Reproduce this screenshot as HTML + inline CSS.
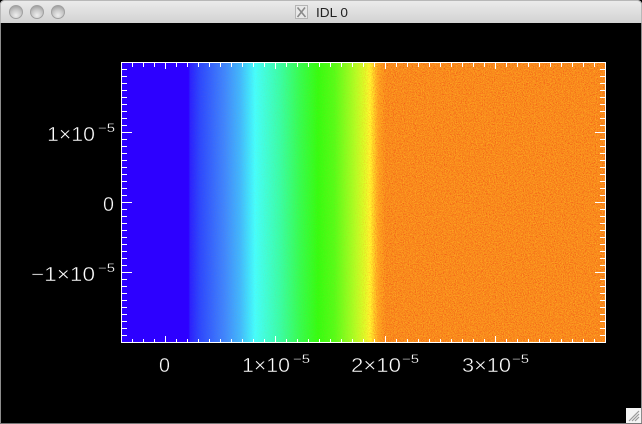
<!DOCTYPE html>
<html>
<head>
<meta charset="utf-8">
<style>
html,body{margin:0;padding:0;background:#fff;width:642px;height:424px;overflow:hidden}
svg{display:block}
.t{font-family:"Liberation Sans",sans-serif;fill:#fff;stroke:#000;stroke-width:.45px;paint-order:fill stroke}
.b{font-size:20px}
.s{font-size:12px;stroke-width:.2px}
</style>
</head>
<body>
<svg width="642" height="424" viewBox="0 0 642 424" xmlns="http://www.w3.org/2000/svg">
<defs>
<linearGradient id="bar" x1="0" y1="0" x2="0" y2="1">
<stop offset="0" stop-color="#ececec"/><stop offset="1" stop-color="#d2d2d2"/>
</linearGradient>
<radialGradient id="btn" cx=".5" cy=".75" r=".75">
<stop offset="0" stop-color="#eeeeee"/><stop offset=".55" stop-color="#c8c8c8"/><stop offset="1" stop-color="#9d9d9d"/>
</radialGradient>
<linearGradient id="map" gradientUnits="userSpaceOnUse" x1="122" y1="0" x2="605" y2="0">
<stop offset="0" stop-color="#2d00ff"/>
<stop offset=".1377" stop-color="#2d00ff"/>
<stop offset=".1408" stop-color="#2a20ff"/>
<stop offset=".1615" stop-color="#2c48ff"/>
<stop offset=".2133" stop-color="#3f88ff"/>
<stop offset=".2443" stop-color="#40b8ff"/>
<stop offset=".2650" stop-color="#40e8ff"/>
<stop offset=".2754" stop-color="#44ffff"/>
<stop offset=".3271" stop-color="#38ffa8"/>
<stop offset=".3685" stop-color="#34ff50"/>
<stop offset=".4058" stop-color="#33ff10"/>
<stop offset=".4400" stop-color="#55ff18"/>
<stop offset=".4750" stop-color="#a0ff22"/>
<stop offset=".5031" stop-color="#e0ff28"/>
<stop offset=".5135" stop-color="#ffff30"/>
<stop offset=".53" stop-color="#ffb020"/>
<stop offset=".5466" stop-color="#f98f1c"/>
<stop offset="1" stop-color="#f98f1c"/>
</linearGradient>
<linearGradient id="fade" gradientUnits="userSpaceOnUse" x1="190" y1="0" x2="605" y2="0">
<stop offset="0" stop-color="#fff" stop-opacity=".04"/>
<stop offset=".4" stop-color="#fff" stop-opacity=".1"/>
<stop offset=".43" stop-color="#fff" stop-opacity=".3"/>
<stop offset=".47" stop-color="#fff" stop-opacity="1"/>
<stop offset="1" stop-color="#fff" stop-opacity="1"/>
</linearGradient>
<mask id="m" maskUnits="userSpaceOnUse" x="190" y="63" width="415" height="279">
<rect x="190" y="63" width="415" height="279" fill="url(#fade)"/>
</mask>
<filter id="n1" x="0" y="0" width="100%" height="100%" color-interpolation-filters="sRGB">
<feTurbulence type="fractalNoise" baseFrequency=".9" numOctaves="2" seed="4"/>
<feColorMatrix type="matrix" values="0 0 0 0 .95  0 0 0 0 .32  0 0 0 0 .1  3.5 0 0 0 -1.55"/>
</filter>
<filter id="n2" x="0" y="0" width="100%" height="100%" color-interpolation-filters="sRGB">
<feTurbulence type="fractalNoise" baseFrequency=".85" numOctaves="2" seed="11"/>
<feColorMatrix type="matrix" values="0 0 0 0 1  0 0 0 0 .68  0 0 0 0 .15  0 3.5 0 0 -1.6"/>
</filter>
</defs>

<rect width="642" height="424" fill="#000"/>
<path d="M0 23V5Q0 0 5 0H637Q642 0 642 5V23Z" fill="url(#bar)"/>
<path d="M.5 23V5Q.5 .5 5 .5H637Q641.5 .5 641.5 5V23" fill="none" stroke="#b8b8b8"/>
<rect x="0" y="23" width="1" height="401" fill="#8c8c8c"/>
<rect x="641" y="23" width="1" height="401" fill="#8c8c8c"/>
<rect x="0" y="423" width="642" height="1" fill="#777"/>

<circle cx="16" cy="12" r="6.5" fill="url(#btn)" stroke="#a0a0a0"/>
<circle cx="37" cy="12" r="6.5" fill="url(#btn)" stroke="#a0a0a0"/>
<circle cx="58" cy="12" r="6.5" fill="url(#btn)" stroke="#a0a0a0"/>

<rect x="295.5" y="5.5" width="12" height="13" fill="#e8e8e8" stroke="#b5b5b5"/>
<path d="M297.5 7.5L305.5 17M305 7.5L297.5 17" stroke="#8a8a8a" stroke-width="1.6" fill="none"/>
<text x="316" y="17" font-family="'Liberation Sans',sans-serif" font-size="12.5" fill="#222" textLength="32" lengthAdjust="spacingAndGlyphs">IDL 0</text>

<rect x="122" y="63" width="483" height="279" fill="url(#map)"/>
<g mask="url(#m)">
<rect x="190" y="63" width="415" height="279" filter="url(#n1)" opacity=".8"/>
<rect x="190" y="63" width="415" height="279" filter="url(#n2)" opacity=".8"/>
</g>

<rect x="121.5" y="62.5" width="484" height="280" fill="none" stroke="#fff"/>
<g stroke="#fff" fill="none">
<line x1="132" y1="65" x2="605" y2="65" stroke-width="4" stroke-dasharray="1 10"/>
<line x1="132" y1="340.5" x2="605" y2="340.5" stroke-width="3" stroke-dasharray="1 10"/>
<line x1="124.5" y1="69" x2="124.5" y2="342" stroke-width="5" stroke-dasharray="1 6"/>
<line x1="602.5" y1="69" x2="602.5" y2="342" stroke-width="5" stroke-dasharray="1 6"/>
<path d="M165.5 63V69M275.5 63V69M385.5 63V69M495.5 63V69M165.5 336V342M275.5 336V342M385.5 336V342M495.5 336V342M122 132.5H132M122 202.5H132M122 272.5H132M595 132.5H605M595 202.5H605M595 272.5H605"/>
</g>

<!-- x labels -->
<text class="t b" x="159" y="372" textLength="11" lengthAdjust="spacingAndGlyphs">0</text>
<text class="t b" x="242" y="372" textLength="48" lengthAdjust="spacingAndGlyphs">1×10</text>
<text class="t s" x="293" y="363" textLength="17" lengthAdjust="spacingAndGlyphs">−5</text>
<text class="t b" x="351" y="372" textLength="50" lengthAdjust="spacingAndGlyphs">2×10</text>
<text class="t s" x="402" y="363" textLength="17" lengthAdjust="spacingAndGlyphs">−5</text>
<text class="t b" x="462" y="372" textLength="49" lengthAdjust="spacingAndGlyphs">3×10</text>
<text class="t s" x="512" y="363" textLength="17" lengthAdjust="spacingAndGlyphs">−5</text>

<!-- y labels -->
<text class="t b" x="47" y="141" textLength="48" lengthAdjust="spacingAndGlyphs">1×10</text>
<text class="t s" x="98" y="132" textLength="17" lengthAdjust="spacingAndGlyphs">−5</text>
<text class="t b" x="103" y="211" textLength="11" lengthAdjust="spacingAndGlyphs">0</text>
<text class="t b" x="31" y="281" textLength="64" lengthAdjust="spacingAndGlyphs">−1×10</text>
<text class="t s" x="98" y="272" textLength="17" lengthAdjust="spacingAndGlyphs">−5</text>

<!-- resize grip -->
<rect x="626" y="408" width="15" height="15" fill="#f4f4f4"/>
<path d="M629 421L639 411M632 421L639 414M635 421L639 417" stroke="#9a9a9a" stroke-width="1.2" fill="none"/>
</svg>
</body>
</html>
